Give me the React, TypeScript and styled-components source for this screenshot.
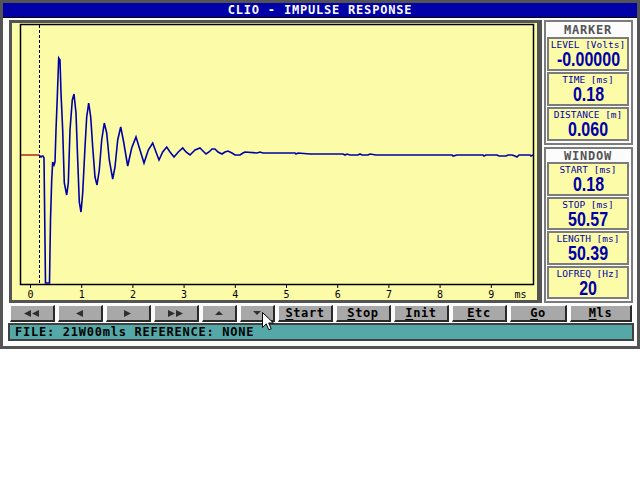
import React from "react";
import styled, { createGlobalStyle } from "styled-components";

const mono = `"DejaVu Sans Mono", "Liberation Mono", monospace`;

const GlobalStyle = createGlobalStyle`
  html, body {
    margin: 0;
    padding: 0;
    background: #ffffff;
  }
  body {
    font-family: ${mono};
  }
`;

const Window = styled.div`
  position: relative;
  width: 640px;
  height: 349px;
  box-sizing: border-box;
  border: 3px solid #545454;
  background: #fcfcfc;
  display: flex;
  flex-direction: column;
`;

const TitleBar = styled.div`
  height: 14px;
  background: #0000a8;
  border-bottom: 1px solid #000;
  color: #fcfcfc;
  font: bold 12px ${mono};
  letter-spacing: 0.8px;
  display: flex;
  align-items: center;
  justify-content: center;
`;

const Body = styled.div`
  padding: 2px 4px 0 6px;
  display: flex;
  flex-direction: column;
`;

const Main = styled.div`
  display: grid;
  grid-template-columns: 533px 89px;
  column-gap: 2px;
  height: 283px;
`;

const PlotPanel = styled.div`
  box-sizing: border-box;
  border: 3px solid #545454;
  border-right-width: 5px;
  background: #fcfca8;
  display: flex;
`;

const Side = styled.div`
  display: flex;
  flex-direction: column;
  gap: 2px;
  min-height: 0;
`;

const Group = styled.div<{ $height?: number }>`
  box-sizing: border-box;
  ${(p) => (p.$height ? `height: ${p.$height}px; flex: none;` : "flex: 1 1 0;")}
  min-height: 0;
  border: 2px solid #7c7c7c;
  background: #fcfcfc;
  padding: 0 2px 2px 1px;
  display: flex;
  flex-direction: column;
`;

const GroupTitle = styled.div<{ $height: number }>`
  height: ${(p) => p.$height}px;
  flex: none;
  color: #545454;
  font: bold 12px ${mono};
  letter-spacing: 0.8px;
  display: flex;
  align-items: center;
  justify-content: center;
`;

const Boxes = styled.div`
  flex: 1 1 0;
  min-height: 0;
  display: flex;
  flex-direction: column;
  gap: 1px;
`;

const Box = styled.div`
  flex: 1 1 0;
  min-height: 0;
  overflow: hidden;
  box-sizing: border-box;
  border: 2px solid #7c7c7c;
  background: #fcfca8;
  display: flex;
  flex-direction: column;
  align-items: center;
  color: #0000a8;
`;

const Label = styled.div`
  font: 9.5px ${mono};
  line-height: 10px;
  margin-top: 1px;
  white-space: nowrap;
`;

const Value = styled.div`
  margin-top: 1px;
  font: bold 20px "Liberation Sans", Arial, sans-serif;
  line-height: 17px;
  transform: scaleX(0.8);
  white-space: nowrap;
`;

const ButtonRow = styled.div`
  margin-top: 2px;
  height: 17px;
  padding-left: 1px;
  display: flex;
  gap: 3px;
`;

const Button = styled.div<{ $width: number }>`
  width: ${(p) => p.$width}px;
  box-sizing: border-box;
  background: #a8a8a8;
  border-top: 1px solid #fcfcfc;
  border-left: 1px solid #fcfcfc;
  border-right: 2px solid #2a2a2a;
  border-bottom: 2px solid #2a2a2a;
  color: #000;
  font: bold 12px ${mono};
  letter-spacing: 0.6px;
  display: flex;
  align-items: center;
  justify-content: center;
`;

const Hot = styled.span`
  text-decoration: underline;
  text-underline-offset: 2px;
`;

const StatusBar = styled.div`
  margin: 1px 0 0 -1px;
  width: 626px;
  height: 18px;
  box-sizing: border-box;
  border: 2px solid #404040;
  background: #54a8a8;
  color: #000;
  font: bold 12px ${mono};
  letter-spacing: 0.75px;
  padding-left: 5px;
  display: flex;
  align-items: center;
`;

const Cursor = styled.svg`
  position: absolute;
  left: 259px;
  top: 309px;
`;

const trace = [
  [39, 155], [40, 156], [41, 157], [42, 156], [43, 156], [44, 158],
  [45.5, 283], [49.5, 283], [50.5, 220], [51.7, 180], [52.7, 162], [54, 165],
  [55, 162], [56, 130], [57.3, 97], [58.7, 58], [60, 60], [61, 93],
  [62.7, 130], [64.3, 183], [66.7, 195], [68.3, 183], [70, 130], [72.3, 100],
  [74, 94], [76, 113], [77.7, 160], [79.3, 202], [81, 212], [82.7, 193],
  [85, 147], [86.7, 117], [88.7, 103], [90.7, 117], [92.7, 147], [95, 177],
  [97, 185], [99.3, 170], [101.7, 140], [104.3, 123], [106.7, 133], [109.3, 160],
  [112.7, 179], [115, 167], [117.7, 140], [120.7, 127], [123.3, 140], [127.7, 166],
  [131.7, 148], [136, 137], [140, 150], [144, 163], [148.3, 150], [152.7, 143],
  [156, 152], [159, 160], [162.7, 152], [166.7, 147], [170, 152], [174, 157],
  [178.3, 152], [182.7, 148], [186, 152], [190, 155], [195, 150], [200, 148],
  [202, 150], [206, 154], [209, 152], [212, 149], [215, 149], [218, 152],
  [222, 154], [225, 152], [228, 151], [232, 153], [235, 155], [240, 155],
  [243, 153], [245, 152], [257, 153], [260, 152], [263, 153], [295, 153],
  [296, 154], [298, 153], [310, 154], [343, 154], [345, 155], [347, 154],
  [350, 155], [358, 155], [360, 154], [362, 155], [368, 155], [370, 154],
  [376, 155], [452, 155], [453, 156], [457, 155], [483, 155], [484, 156],
  [486, 155], [497, 155], [499, 156], [506, 156], [508, 155], [512, 155],
  [515, 156], [517, 157], [519, 155], [530, 155], [531, 156], [533, 155],
];

function Plot() {
  const ticks = Array.from({ length: 10 }, (_, i) => 30.5 + i * 51.2);
  return (
    <svg width={525} height={277} viewBox="12 23 525 277">
      <rect x={20.5} y={24.5} width={513} height={260} fill="none" stroke="#000" strokeWidth={1.5} />
      <line x1={39.5} y1={25} x2={39.5} y2={284} stroke="#000" strokeWidth={1} strokeDasharray="3 2" />
      <line x1={21} y1={155} x2={39} y2={155} stroke="#a80000" strokeWidth={1.3} />
      <polyline
        points={trace.map((p) => p.join(",")).join(" ")}
        fill="none"
        stroke="#0000a8"
        strokeWidth={1.6}
        strokeLinejoin="miter"
      />
      {ticks.map((x, i) => (
        <g key={i}>
          <line x1={x} y1={285} x2={x} y2={288} stroke="#000" strokeWidth={1} />
          <text x={x} y={298} fontSize={10} fontFamily={mono} textAnchor="middle" fill="#000">
            {i}
          </text>
        </g>
      ))}
      <text x={520.5} y={298} fontSize={10} fontFamily={mono} textAnchor="middle" fill="#000">
        ms
      </text>
    </svg>
  );
}

function Tri({ dir, double }: { dir: "l" | "r" | "u" | "d"; double?: boolean }) {
  if (dir === "u" || dir === "d") {
    const pts = dir === "u" ? "0,4 4,0 8,4" : "0,0 4,4 8,0";
    return (
      <svg width={8} height={4}>
        <polygon points={pts} fill="#303030" />
      </svg>
    );
  }
  const one = (ox: number) =>
    dir === "l" ? `${ox},3.5 ${ox + 7},0 ${ox + 7},7` : `${ox},0 ${ox + 7},3.5 ${ox},7`;
  return (
    <svg width={double ? 16 : 8} height={7}>
      <polygon points={one(0)} fill="#303030" />
      {double && <polygon points={one(8)} fill="#303030" />}
    </svg>
  );
}

const buttons: { w: number; icon?: React.ReactNode; hot?: string; rest?: string }[] = [
  { w: 45, icon: <Tri dir="l" double /> },
  { w: 45, icon: <Tri dir="l" /> },
  { w: 45, icon: <Tri dir="r" /> },
  { w: 45, icon: <Tri dir="r" double /> },
  { w: 35, icon: <Tri dir="u" /> },
  { w: 35, icon: <Tri dir="d" /> },
  { w: 55, hot: "S", rest: "tart" },
  { w: 55, hot: "S", rest: "top" },
  { w: 55, hot: "I", rest: "nit" },
  { w: 55, hot: "E", rest: "tc" },
  { w: 57, hot: "G", rest: "o" },
  { w: 62, hot: "M", rest: "ls" },
];

function Readout({ label, value }: { label: string; value: string }) {
  return (
    <Box>
      <Label>{label}</Label>
      <Value>{value}</Value>
    </Box>
  );
}

export default function App() {
  return (
    <>
      <GlobalStyle />
      <Window>
        <TitleBar>CLIO - IMPULSE RESPONSE</TitleBar>
        <Body>
          <Main>
            <PlotPanel>
              <Plot />
            </PlotPanel>
            <Side>
              <Group $height={125}>
                <GroupTitle $height={15}>MARKER</GroupTitle>
                <Boxes>
                  <Readout label="LEVEL [Volts]" value="-0.00000" />
                  <Readout label="TIME [ms]" value="0.18" />
                  <Readout label="DISTANCE [m]" value="0.060" />
                </Boxes>
              </Group>
              <Group>
                <GroupTitle $height={13}>WINDOW</GroupTitle>
                <Boxes>
                  <Readout label="START [ms]" value="0.18" />
                  <Readout label="STOP [ms]" value="50.57" />
                  <Readout label="LENGTH [ms]" value="50.39" />
                  <Readout label="LOFREQ [Hz]" value="20" />
                </Boxes>
              </Group>
            </Side>
          </Main>
          <ButtonRow>
            {buttons.map((b, i) => (
              <Button key={i} $width={b.w}>
                {b.icon}
                {b.hot && (
                  <span>
                    <Hot>{b.hot}</Hot>
                    {b.rest}
                  </span>
                )}
              </Button>
            ))}
          </ButtonRow>
          <StatusBar>FILE: 21W00mls REFERENCE: NONE</StatusBar>
        </Body>
        <Cursor width={13} height={19} viewBox="0 0 13 19">
          <path d="M0.5 0.5 L0.5 15.5 L4.2 11.8 L6.8 17.8 L9.2 16.8 L6.7 11 L11.5 11 Z" fill="#fff" stroke="#000" strokeWidth={1} />
        </Cursor>
      </Window>
    </>
  );
}
